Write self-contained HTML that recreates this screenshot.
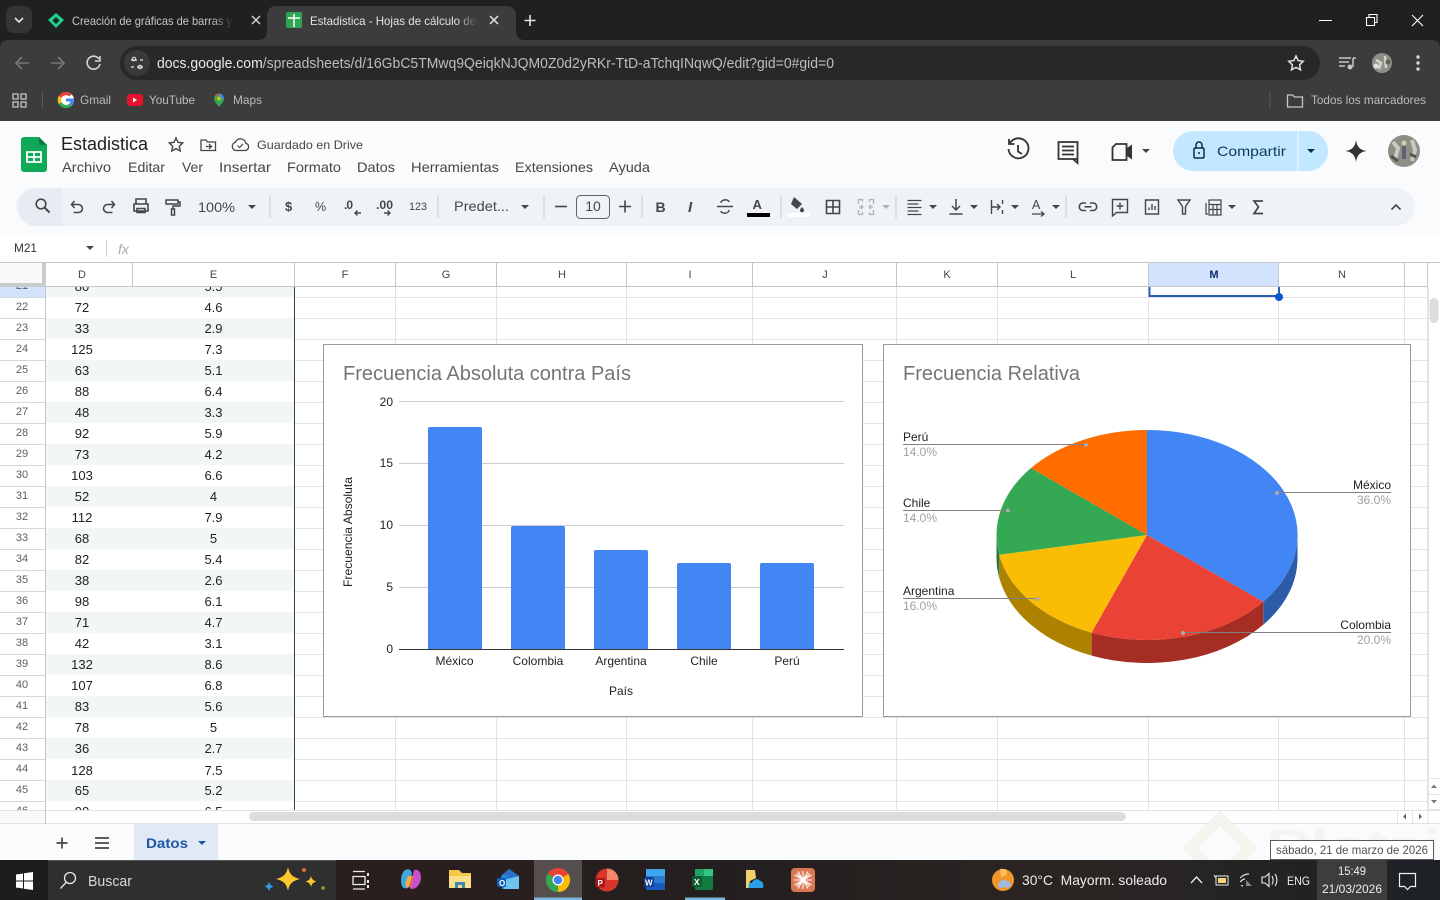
<!DOCTYPE html>
<html lang="es"><head><meta charset="utf-8"><title>Estadistica - Hojas de cálculo de Google</title>
<style>
html,body{margin:0;padding:0;background:#fff;width:1440px;height:900px;overflow:hidden}
svg{display:block}
text{font-family:"Liberation Sans",sans-serif;white-space:pre}
.c{font-size:13px;fill:#222;text-anchor:middle}
.n{font-size:11px;fill:#5a5e62;text-anchor:middle}
.h{font-size:11px;fill:#444;text-anchor:middle}
.m{font-size:14px;fill:#444746}
.t{font-size:13px;fill:#444746}
.i{fill:none;stroke:#444746;stroke-width:1.6}
.f{fill:#444746}
.w{fill:none;stroke:#c7c7c7;stroke-width:1.5}
.b{font-size:12px;fill:#b9bcbf}
.a{font-size:12px;fill:#222}
.p{font-size:12px;fill:#a0a0a0}
.l{stroke:#808080;stroke-width:1}
.d{fill:#aaa}
.s{stroke:#c7cbcf;stroke-width:1}
</style></head><body>
<svg width="1440" height="900" viewBox="0 0 1440 900" xmlns="http://www.w3.org/2000/svg">
<defs>
<linearGradient id="tb" x1="0" x2="1" y1="0" y2="0"><stop offset="0" stop-color="#1d1d1d"/><stop offset=".3" stop-color="#2b1f1e"/><stop offset=".5" stop-color="#241f1f"/><stop offset=".75" stop-color="#2b2523"/><stop offset="1" stop-color="#1d2126"/></linearGradient>
<linearGradient id="fade1" x1="0" x2="1"><stop offset="0" stop-color="#1f2020" stop-opacity="0"/><stop offset="1" stop-color="#1f2020"/></linearGradient>
<linearGradient id="fade2" x1="0" x2="1"><stop offset="0" stop-color="#3c3c3c" stop-opacity="0"/><stop offset="1" stop-color="#3c3c3c"/></linearGradient>
<radialGradient id="av" cx=".5" cy=".5" r=".6"><stop offset="0" stop-color="#8d8f86"/><stop offset=".6" stop-color="#7d7f76"/><stop offset="1" stop-color="#c9cac3"/></radialGradient>
<clipPath id="gr"><rect x="0" y="287" width="1428" height="523"/></clipPath>
</defs>

<!-- browser chrome -->
<rect width="1440" height="121" fill="#1f2020"/>
<rect x="0" y="40" width="1440" height="81" fill="#3c3c3c"/>
<path d="M0 40h8Q0 40 0 48zM1440 40h-8Q1440 40 1440 48z" fill="#1f2020"/>
<rect x="6" y="6" width="26" height="27" rx="8" fill="#343434"/>
<path d="M15 18l4 4 4-4" fill="none" stroke="#e3e3e3" stroke-width="1.600"/>
<path d="M56 13l8 7-8 8-8-8zM56 17l-3.500 3.500 3.500 3.500 3.500-3.500z" fill="#1fd08a" fill-rule="evenodd"/>
<text x="72" y="25" font-size="12" fill="#c4c7c5" textLength="160" lengthAdjust="spacingAndGlyphs">Creación de gráficas de barras y</text>
<rect x="212" y="10" width="22" height="20" fill="url(#fade1)"/>
<path d="M252 16l8 8M260 16l-8 8" stroke="#d5d5d5" stroke-width="1.500"/>
<path d="M258 40q9 0 9-9V16q0-10 10-10h229q10 0 10 10v15q0 9 9 9z" fill="#3c3c3c"/>
<rect x="286" y="12" width="16" height="16" rx="2" fill="#2ea653"/>
<path d="M288 18h12M294 14v13" stroke="#fff" stroke-width="1.500"/>
<text x="310" y="25" font-size="12" fill="#e3e3e3" textLength="166" lengthAdjust="spacingAndGlyphs">Estadistica - Hojas de cálculo de</text>
<rect x="456" y="10" width="22" height="20" fill="url(#fade2)"/>
<path d="M490 16l8 8M498 16l-8 8" stroke="#e3e3e3" stroke-width="1.500"/>
<path d="M530 15v11M524.500 20.500h11" stroke="#e3e3e3" stroke-width="1.600"/>
<path d="M1319 20.500h13" stroke="#fff"/>
<path d="M1366.500 17.500h8v8h-8zM1369 17v-2.500h8v8h-2.500" fill="none" stroke="#fff" stroke-width="1.100"/>
<path d="M1412 15l11 11M1423 15l-11 11" stroke="#fff" stroke-width="1.100"/>

<path d="M29 63H16M22 57l-6 6 6 6" fill="none" stroke="#777" stroke-width="1.600"/>
<path d="M51 63h13M58 57l6 6-6 6" fill="none" stroke="#777" stroke-width="1.600"/>
<path d="M99 59a6.500 6.500 0 1 0 1 5M100 56v5h-5" fill="none" stroke="#d3d3d3" stroke-width="1.600"/>
<rect x="120" y="46" width="1200" height="34" rx="17" fill="#282828"/>
<circle cx="137" cy="63" r="13" fill="#3a3a3a"/>
<path d="M131 60h6M140 60h3M131 67h3M137 67h6" stroke="#e3e3e3" stroke-width="1.300"/><circle cx="134" cy="59" r="1.800" fill="none" stroke="#e3e3e3"/><circle cx="140" cy="67" r="1.800" fill="none" stroke="#e3e3e3"/>
<text x="157" y="68" font-size="14.500" fill="#e8e8e8" textLength="677" lengthAdjust="spacingAndGlyphs">docs.google.com<tspan fill="#bdbdbd">/spreadsheets/d/16GbC5TMwq9QeiqkNJQM0Z0d2yRKr-TtD-aTchqINqwQ/edit?gid=0#gid=0</tspan></text>
<path d="M1296 56l2.200 4.600 5 .7-3.600 3.500.9 5-4.500-2.400-4.500 2.400.9-5-3.600-3.500 5-.7z" fill="none" stroke="#e3e3e3" stroke-width="1.500"/>
<path d="M1339 58h12M1339 62h10M1339 66h6M1353 58v9" stroke="#c7c7c7" stroke-width="1.500" fill="none"/><circle cx="1350" cy="67" r="2.500" fill="#c7c7c7"/><path d="M1353 58h3" stroke="#c7c7c7" stroke-width="1.500"/>
<circle cx="1382" cy="63" r="10" fill="#8e9087"/><path d="M1376 60l5 3-2 6M1385 56l1 12" stroke="#d4d4cc" stroke-width="2.500" fill="none"/><circle cx="1376" cy="66" r="2.500" fill="#e3e3de"/><circle cx="1388" cy="62" r="2.500" fill="#5e6058"/>
<circle cx="1418" cy="57" r="1.700" fill="#d5d5d5"/><circle cx="1418" cy="63" r="1.700" fill="#d5d5d5"/><circle cx="1418" cy="69" r="1.700" fill="#d5d5d5"/>

<path d="M13 94h5v5h-5zM21 94h5v5h-5zM13 102h5v5h-5zM21 102h5v5h-5z" fill="none" stroke="#c7c7c7" stroke-width="1.300"/>
<path d="M42.500 92v16" stroke="#5c5c5c"/>
<circle cx="66" cy="100" r="8" fill="#fff"/>
<path d="M66 92a8 8 0 0 1 5.600 2.300l-2.200 2.200A5 5 0 0 0 61.500 98l-2.700-2A8 8 0 0 1 66 92z" fill="#ea4335"/><path d="M58.800 96l2.700 2a5 5 0 0 0 0 4l-2.700 2a8 8 0 0 1 0-8z" fill="#fbbc05"/><path d="M61.500 102a5 5 0 0 0 7.500 2l2.500 2a8 8 0 0 1-12.700-2z" fill="#34a853"/><path d="M74 100a8 8 0 0 1-2.500 6l-2.500-2a4 4 0 0 0 1.500-2.500H66v-3h7.800z" fill="#4285f4"/>
<text x="80" y="104" class="b" textLength="31" lengthAdjust="spacingAndGlyphs">Gmail</text>
<rect x="127" y="94" width="16" height="12" rx="3" fill="#e8112d"/><path d="M133 97.500l4 2.500-4 2.500z" fill="#fff"/>
<text x="149" y="104" class="b" textLength="46" lengthAdjust="spacingAndGlyphs">YouTube</text>
<path d="M219 107c-2-3-5-5-5-8.500a5 5 0 0 1 10 0c0 3.500-3 5.500-5 8.500z" fill="#34a853"/><path d="M215 95a5 5 0 0 1 4-1.500l-2.500 3z" fill="#ea4335"/><path d="M219 93.500a5 5 0 0 1 5 5l-3 .5z" fill="#4285f4"/><circle cx="219" cy="98.500" r="1.800" fill="#fbbc05"/>
<text x="233" y="104" class="b" textLength="29" lengthAdjust="spacingAndGlyphs">Maps</text>
<path d="M1270 92v16" stroke="#5c5c5c"/>
<path d="M1287.500 95h5l2 2h8v10h-15z" fill="none" stroke="#c7c7c7" stroke-width="1.300"/>
<text x="1311" y="104" class="b" textLength="115" lengthAdjust="spacingAndGlyphs">Todos los marcadores</text>

<!-- docs header -->
<rect x="0" y="121" width="1440" height="113" fill="#f9fbfd"/>
<path d="M24 137h15l8 8v24a3 3 0 0 1-3 3H24a3 3 0 0 1-3-3v-29a3 3 0 0 1 3-3z" fill="#0fa958"/>
<path d="M39 137l8 8h-8z" fill="#0a7e41"/>
<path d="M27 152h14v10H27zM34 152v10M27 157h14" fill="none" stroke="#fff" stroke-width="1.800"/>
<text x="61" y="150" font-size="18" fill="#1f1f1f" textLength="87" lengthAdjust="spacingAndGlyphs">Estadistica</text>
<path d="M176 138l2 4.300 4.700.6-3.400 3.300.9 4.700-4.200-2.300-4.200 2.300.9-4.700-3.400-3.300 4.700-.6z" class="i" style="stroke-width:1.400"/>
<path d="M201 140h5l1.500 2h8v8.500h-14.500zM206 146.500h5M209 144l2.500 2.500-2.500 2.500" class="i" style="stroke-width:1.300"/>
<path d="M236 150.500h9a3.700 3.700 0 0 0 .8-7.300 5.500 5.500 0 0 0-10.500-.9 4.200 4.200 0 0 0 .7 8.200z" class="i" style="stroke-width:1.300"/><path d="M237.500 145.500l2 2 3.500-3.500" class="i" style="stroke-width:1.200"/>
<text x="257" y="149" font-size="12" fill="#444746" textLength="106" lengthAdjust="spacingAndGlyphs">Guardado en Drive</text>
<text x="62" y="172" class="m" textLength="49" lengthAdjust="spacingAndGlyphs">Archivo</text>
<text x="128" y="172" class="m" textLength="37" lengthAdjust="spacingAndGlyphs">Editar</text>
<text x="182" y="172" class="m" textLength="21" lengthAdjust="spacingAndGlyphs">Ver</text>
<text x="219" y="172" class="m" textLength="52" lengthAdjust="spacingAndGlyphs">Insertar</text>
<text x="287" y="172" class="m" textLength="54" lengthAdjust="spacingAndGlyphs">Formato</text>
<text x="357" y="172" class="m" textLength="38" lengthAdjust="spacingAndGlyphs">Datos</text>
<text x="411" y="172" class="m" textLength="88" lengthAdjust="spacingAndGlyphs">Herramientas</text>
<text x="515" y="172" class="m" textLength="78" lengthAdjust="spacingAndGlyphs">Extensiones</text>
<text x="609" y="172" class="m" textLength="41" lengthAdjust="spacingAndGlyphs">Ayuda</text>

<!-- right header icons -->
<path d="M1010 143a10 10 0 1 1-1.500 6M1009 139v5h5.500M1018 145v6.500l4 2.500" fill="none" stroke="#333" stroke-width="1.800"/>
<path d="M1058.500 142h19v17h-19zM1062 146.500h12M1062 150.500h12M1062 154.500h12M1073 159l4.500 4v-4" fill="none" stroke="#333" stroke-width="1.800"/>
<path d="M1116 144h10.500v16h-14v-12.500z" fill="none" stroke="#333" stroke-width="1.800"/><path d="M1127 148l5-3.500v15l-5-3.500z" fill="#333"/>
<path d="M1142 149h8l-4 4z" fill="#444746"/>
<rect x="1173" y="131" width="155" height="40" rx="20" fill="#c2e7ff"/>
<path d="M1298 131v40" stroke="#f9fbfd"/>
<rect x="1194" y="148" width="10" height="10" rx="1.200" fill="none" stroke="#0b2e46" stroke-width="1.500"/><path d="M1196 148v-3a3 3 0 0 1 6 0v3" fill="none" stroke="#0b2e46" stroke-width="1.500"/><circle cx="1199" cy="153" r="1" fill="#0b2e46"/>
<text x="1217" y="156" font-size="14" fill="#0b3b5c" textLength="69" lengthAdjust="spacingAndGlyphs">Compartir</text>
<path d="M1307 149h8l-4 4z" fill="#0b2e46"/>
<path d="M1356 140c1 7 4 10 10.500 11-6.500 1-9.500 4-10.500 11-1-7-4-10-10.500-11 6.500-1 9.500-4 10.500-11z" fill="#333"/>
<circle cx="1404" cy="151" r="16" fill="#8e8f84"/><path d="M1393 142l5 6-3 12M1412 140l3 10-3 11" stroke="#c9cac0" stroke-width="4" fill="none"/><path d="M1402 146h4v13h-4z" fill="#5d6078"/><circle cx="1404" cy="143" r="2.500" fill="#d8c9b5"/><path d="M1391 156l7 5M1410 154l6 3" stroke="#55574f" stroke-width="3"/>

<!-- toolbar -->
<rect x="16" y="188" width="1399" height="38" rx="19" fill="#eff3f8"/>
<path d="M35 188h27v38H35a19 19 0 0 1-17-19 19 19 0 0 1 17-19z" fill="#e7ebf2"/>
<circle cx="41" cy="204" r="4.800" class="i"/><path d="M44.500 207.500l5 5" class="i" style="stroke-width:2"/>
<path d="M74.500 201l-3 3.500 3 3.500M71.500 204.500h7a4 4 0 0 1 0 8h-5" class="i" style="stroke-width:1.500"/>
<path d="M111.500 201l3 3.500-3 3.500M114.500 204.500h-7a4 4 0 0 0 0 8h5" class="i" style="stroke-width:1.500"/>
<path d="M136 204v-5h10v5M134 204h14v7h-14zM137 208.500h8v4h-8z" class="i"/>
<path d="M166 200h12v4h-12zM178 202h2v4h-7v3M171.500 209h3v6h-3z" class="i" style="stroke-width:1.500"/>
<text x="198" y="212" class="m" textLength="37" lengthAdjust="spacingAndGlyphs">100%</text>
<path d="M248 205h8l-4 4z" class="f"/>
<path d="M270 195v23" class="s"/>
<text x="285" y="211" font-size="13" fill="#444746" font-weight="bold">$</text>
<text x="315" y="211" font-size="12.500" fill="#444746">%</text>
<text x="344" y="209" font-size="12" fill="#444746" font-weight="bold" textLength="9">.0</text><path d="M361 213h-6M357.500 210.500l-2.500 2.500 2.500 2.500" class="i" style="stroke-width:1.400"/>
<text x="376" y="209" font-size="12" fill="#444746" font-weight="bold" textLength="17" lengthAdjust="spacingAndGlyphs">.00</text><path d="M384 213h6M387.500 210.500l2.500 2.500-2.500 2.500" class="i" style="stroke-width:1.400"/>
<text x="409" y="210" font-size="11" fill="#444746" textLength="18" lengthAdjust="spacingAndGlyphs">123</text>
<path d="M438 195v23" class="s"/>
<text x="454" y="211" class="m" textLength="55" lengthAdjust="spacingAndGlyphs">Predet...</text>
<path d="M521 205h8l-4 4z" class="f"/>
<path d="M544 195v23" class="s"/>
<path d="M555 206.500h12" class="i"/>
<rect x="576.500" y="195.500" width="33" height="23" rx="4" fill="none" stroke="#5f6368"/>
<text x="593" y="211" class="m" text-anchor="middle">10</text>
<path d="M619 206.500h12M625 200.500v12" class="i"/>
<path d="M642 195v23" class="s"/>
<text x="655.500" y="212" font-size="14" fill="#444746" font-weight="bold">B</text>
<text x="688" y="212" font-size="15" fill="#444746" font-weight="bold" font-style="italic">I</text>
<path d="M717 206.500h16M721 203c0-4 8-4 8-1M729 210c0 4-8 4-8 1" class="i" style="stroke-width:1.400"/>
<text x="752.500" y="209" font-size="13" fill="#444746" font-weight="bold">A</text>
<rect x="747" y="213" width="23" height="4" fill="#000"/>
<path d="M781 195v23" class="s"/>
<path d="M794 197l8 7-5 5-6-5zM802 207c-1.500 1.700-2 2.500-2 3.200a1.800 1.800 0 0 0 4 0c0-.7-.5-1.500-2-3.200z" fill="#444746"/>
<rect x="788" y="213" width="22" height="4" fill="#fff"/>
<path d="M826.500 200.500h13v13h-13zM833 200.500v13M826.500 207h13" class="i"/>
<path d="M858.500 204v-4.500h4v2.500M873.500 204v-4.500h-4v2.500M858.500 210v4.500h4v-2.500M873.500 210v4.500h-4v-2.500M859 207h4M869 207h4M863 207l-2-2M863 207l-2 2M869 207l2-2M869 207l2 2" fill="none" stroke="#b1b4b7" stroke-width="1.300"/>
<path d="M882 205h8l-4 4z" fill="#b1b4b7"/>
<path d="M896 195v23" class="s"/>
<path d="M907.500 200.500h14M907.500 204h11M907.500 207.500h14M907.500 211h11M907.500 214.500h14" class="i" style="stroke-width:1.300"/>
<path d="M929 205h8l-4 4z" class="f"/>
<path d="M956 199v11M952 206l4 4 4-4M949.500 214h13" class="i" style="stroke-width:1.500"/>
<path d="M970 205h8l-4 4z" class="f"/>
<path d="M991.500 200v14M1002.500 200v4M1002.500 210v4M992 207h8M997 204l3 3-3 3" class="i" style="stroke-width:1.400"/>
<path d="M1011 205h8l-4 4z" class="f"/>
<text x="1032" y="209" font-size="12.500" fill="#444746" textLength="12">A</text><path d="M1032 214h12M1041 211.500l3 2.500-3 2.500" class="i" style="stroke-width:1.300"/>
<path d="M1052 205h8l-4 4z" class="f"/>
<path d="M1066 195v23" class="s"/>
<path d="M1086 203h-3.500a3.800 3.800 0 0 0 0 7.500h3.500M1090 203h3.500a3.800 3.800 0 0 1 0 7.500H1090M1084.500 206.800h7" class="i"/>
<path d="M1112.500 199.500h15v13h-11l-4 3.500zM1120 202.500v7M1116.500 206h7" class="i" style="stroke-width:1.400"/>
<path d="M1145.500 200h13v14h-13zM1149 210v-2.500M1152 210v-6M1155 210v-4" class="i" style="stroke-width:1.400"/>
<path d="M1178 200h12l-4.500 6.500v7.500h-3v-7.500z" class="i" style="stroke-width:1.400"/>
<path d="M1206 203v11h2M1209 200h12v15h-12zM1209 204.500h12M1213 204.500v10.500M1217 204.500v10.500M1209 209.500h12" class="i" style="stroke-width:1.200"/>
<path d="M1228 205h8l-4 4z" class="f"/>
<path d="M1263 201h-9l4.500 6-4.500 6.500h9" class="i" style="stroke-width:1.700"/>
<path d="M1391.500 209.500l4.500-4.500 4.500 4.500" class="i"/>

<!-- formula bar -->
<rect x="0" y="234" width="1440" height="29" fill="#fff"/>
<text x="14" y="252" font-size="12" fill="#333" textLength="23" lengthAdjust="spacingAndGlyphs">M21</text>
<path d="M86 246h8l-4 4z" class="f"/>
<path d="M106.500 240v17" stroke="#d5d5d5"/>
<text x="118" y="254" font-size="14" fill="#aaa" font-style="italic" font-family="Liberation Serif">fx</text>

<!-- grid -->
<g clip-path="url(#gr)">
<rect x="0" y="287" width="1428" height="523" fill="#fff"/>
<path d="M46 276h249v21H46zM46 318h249v21H46zM46 360h249v21H46zM46 402h249v21H46zM46 444h249v21H46zM46 486h249v21H46zM46 528h249v21H46zM46 570h249v21H46zM46 612h249v21H46zM46 654h249v21H46zM46 696h249v21H46zM46 738h249v21H46zM46 780h249v21H46z" fill="#f3f6f7"/>
<path d="M0 297.500H46M0 318.500H46M0 339.500H46M0 360.500H46M0 381.500H46M0 402.500H46M0 423.500H46M0 444.500H46M0 465.500H46M0 486.500H46M0 507.500H46M0 528.500H46M0 549.500H46M0 570.500H46M0 591.500H46M0 612.500H46M0 633.500H46M0 654.500H46M0 675.500H46M0 696.500H46M0 717.500H46M0 738.500H46M0 759.500H46M0 780.500H46M0 801.500H46" stroke="#d5d7d9"/>
<path d="M295 297.500H1428M295 318.500H1428M295 339.500H1428M295 360.500H1428M295 381.500H1428M295 402.500H1428M295 423.500H1428M295 444.500H1428M295 465.500H1428M295 486.500H1428M295 507.500H1428M295 528.500H1428M295 549.500H1428M295 570.500H1428M295 591.500H1428M295 612.500H1428M295 633.500H1428M295 654.500H1428M295 675.500H1428M295 696.500H1428M295 717.500H1428M295 738.500H1428M295 759.500H1428M295 780.500H1428M295 801.500H1428" stroke="#e3e3e3"/>
<path d="M395.500 287V810M496.500 287V810M626.500 287V810M752.500 287V810M896.500 287V810M997.500 287V810M1148.500 287V810M1278.500 287V810M1404.500 287V810M1427.500 287V810" stroke="#e3e3e3"/>
<rect x="0" y="276" width="46" height="21" fill="#d3e3fd"/>
<path d="M45.500 287V810" stroke="#c4c7c5"/>
<path d="M294.500 287V810" stroke="#2f454a"/>
<text x="22" y="289" class="n">21</text><text x="82" y="291" class="c">80</text><text x="213.500" y="291" class="c">5.5</text>
<text x="22" y="310" class="n">22</text><text x="82" y="312" class="c">72</text><text x="213.500" y="312" class="c">4.6</text>
<text x="22" y="331" class="n">23</text><text x="82" y="333" class="c">33</text><text x="213.500" y="333" class="c">2.9</text>
<text x="22" y="352" class="n">24</text><text x="82" y="354" class="c">125</text><text x="213.500" y="354" class="c">7.3</text>
<text x="22" y="373" class="n">25</text><text x="82" y="375" class="c">63</text><text x="213.500" y="375" class="c">5.1</text>
<text x="22" y="394" class="n">26</text><text x="82" y="396" class="c">88</text><text x="213.500" y="396" class="c">6.4</text>
<text x="22" y="415" class="n">27</text><text x="82" y="417" class="c">48</text><text x="213.500" y="417" class="c">3.3</text>
<text x="22" y="436" class="n">28</text><text x="82" y="438" class="c">92</text><text x="213.500" y="438" class="c">5.9</text>
<text x="22" y="457" class="n">29</text><text x="82" y="459" class="c">73</text><text x="213.500" y="459" class="c">4.2</text>
<text x="22" y="478" class="n">30</text><text x="82" y="480" class="c">103</text><text x="213.500" y="480" class="c">6.6</text>
<text x="22" y="499" class="n">31</text><text x="82" y="501" class="c">52</text><text x="213.500" y="501" class="c">4</text>
<text x="22" y="520" class="n">32</text><text x="82" y="522" class="c">112</text><text x="213.500" y="522" class="c">7.9</text>
<text x="22" y="541" class="n">33</text><text x="82" y="543" class="c">68</text><text x="213.500" y="543" class="c">5</text>
<text x="22" y="562" class="n">34</text><text x="82" y="564" class="c">82</text><text x="213.500" y="564" class="c">5.4</text>
<text x="22" y="583" class="n">35</text><text x="82" y="585" class="c">38</text><text x="213.500" y="585" class="c">2.6</text>
<text x="22" y="604" class="n">36</text><text x="82" y="606" class="c">98</text><text x="213.500" y="606" class="c">6.1</text>
<text x="22" y="625" class="n">37</text><text x="82" y="627" class="c">71</text><text x="213.500" y="627" class="c">4.7</text>
<text x="22" y="646" class="n">38</text><text x="82" y="648" class="c">42</text><text x="213.500" y="648" class="c">3.1</text>
<text x="22" y="667" class="n">39</text><text x="82" y="669" class="c">132</text><text x="213.500" y="669" class="c">8.6</text>
<text x="22" y="688" class="n">40</text><text x="82" y="690" class="c">107</text><text x="213.500" y="690" class="c">6.8</text>
<text x="22" y="709" class="n">41</text><text x="82" y="711" class="c">83</text><text x="213.500" y="711" class="c">5.6</text>
<text x="22" y="730" class="n">42</text><text x="82" y="732" class="c">78</text><text x="213.500" y="732" class="c">5</text>
<text x="22" y="751" class="n">43</text><text x="82" y="753" class="c">36</text><text x="213.500" y="753" class="c">2.7</text>
<text x="22" y="772" class="n">44</text><text x="82" y="775" class="c">128</text><text x="213.500" y="775" class="c">7.5</text>
<text x="22" y="793" class="n">45</text><text x="82" y="795" class="c">65</text><text x="213.500" y="795" class="c">5.2</text>
<text x="22" y="814" class="n">46</text><text x="82" y="816" class="c">90</text><text x="213.500" y="816" class="c">6.5</text>
<!-- selection -->
<path d="M1149.500 287v9H1279V287" fill="none" stroke="#2b5fb5" stroke-width="2"/>
<circle cx="1279" cy="297" r="4" fill="#0b57d0"/>
</g>

<!-- col headers -->
<rect x="0" y="263" width="1440" height="24" fill="#fff"/>
<rect x="0" y="263" width="46" height="24" fill="#f8f9fa"/>
<rect x="42" y="263" width="4" height="24" fill="#c9cccc"/>
<rect x="0" y="283" width="46" height="4" fill="#c9cccc"/>
<rect x="1149" y="263" width="130" height="24" fill="#d3e3fd"/>
<path d="M0 262.500H1440M46 286.500H1428" stroke="#c4c7c5"/>
<path d="M132.500 263v24M294.500 263v24M395.500 263v24M496.500 263v24M626.500 263v24M752.500 263v24M896.500 263v24M997.500 263v24M1148.500 263v24M1278.500 263v24M1404.500 263v24M1427.500 263v24" stroke="#c4c7c5"/>
<text x="82" y="278" class="h">D</text><text x="213.500" y="278" class="h">E</text><text x="345" y="278" class="h">F</text><text x="446" y="278" class="h">G</text><text x="562" y="278" class="h">H</text><text x="690" y="278" class="h">I</text><text x="825" y="278" class="h">J</text><text x="947" y="278" class="h">K</text><text x="1073" y="278" class="h">L</text><text x="1214" y="278" class="h" font-weight="bold" style="fill:#0b2e6b">M</text><text x="1342" y="278" class="h">N</text>

<!-- bar chart -->
<rect x="323.500" y="344.500" width="539" height="372" fill="#fff" stroke="#9b9b9b"/>
<text x="343" y="380" font-size="20" fill="#757575" textLength="288" lengthAdjust="spacingAndGlyphs">Frecuencia Absoluta contra País</text>
<path d="M399 401.500H844M399 463.500H844M399 525.500H844M399 587.500H844" stroke="#ccc"/>
<path d="M428 649V429q0-2 2-2h50q2 0 2 2V649z" fill="#4285f4"/>
<path d="M511 649V528q0-2 2-2h50q2 0 2 2V649z" fill="#4285f4"/>
<path d="M594 649V552q0-2 2-2h50q2 0 2 2V649z" fill="#4285f4"/>
<path d="M677 649V565q0-2 2-2h50q2 0 2 2V649z" fill="#4285f4"/>
<path d="M760 649V565q0-2 2-2h50q2 0 2 2V649z" fill="#4285f4"/>
<path d="M399 649.500H844" stroke="#333"/>
<text x="393" y="406" class="a" text-anchor="end">20</text>
<text x="393" y="467" class="a" text-anchor="end">15</text>
<text x="393" y="529" class="a" text-anchor="end">10</text>
<text x="393" y="591" class="a" text-anchor="end">5</text>
<text x="393" y="653" class="a" text-anchor="end">0</text>
<text x="454.500" y="665" class="a" text-anchor="middle">México</text>
<text x="538" y="665" class="a" text-anchor="middle">Colombia</text>
<text x="621" y="665" class="a" text-anchor="middle">Argentina</text>
<text x="704" y="665" class="a" text-anchor="middle">Chile</text>
<text x="787" y="665" class="a" text-anchor="middle">Perú</text>
<text x="621" y="695" class="a" text-anchor="middle">País</text>
<text transform="translate(352 532) rotate(-90)" class="a" text-anchor="middle" textLength="110" lengthAdjust="spacingAndGlyphs">Frecuencia Absoluta</text>

<!-- pie chart -->
<rect x="883.500" y="344.500" width="527" height="372" fill="#fff" stroke="#9b9b9b"/>
<text x="903" y="380" font-size="20" fill="#757575" textLength="177" lengthAdjust="spacingAndGlyphs">Frecuencia Relativa</text>
<path d="M1297.500 535A150.500 105 0 0 1 1263.200 601.800V624.800A150.500 105 0 0 0 1297.500 558Z" fill="#2c5ca8"/>
<path d="M1263.200 601.800A150.500 105 0 0 1 1091.600 632.600V655.600A150.500 105 0 0 0 1263.200 624.800Z" fill="#a52d23"/>
<path d="M1091.600 632.600A150.500 105 0 0 1 999.200 554.700V577.700A150.500 105 0 0 0 1091.600 655.600Z" fill="#ad8200"/>
<path d="M999.200 554.700A150.500 105 0 0 1 996.500 535V558A150.500 105 0 0 0 999.200 577.700Z" fill="#24753a"/>
<path d="M1147 535V430A150.500 105 0 0 1 1263.200 601.800Z" fill="#4285f4"/>
<path d="M1147 535L1263.200 601.800A150.500 105 0 0 1 1091.600 632.600Z" fill="#ea4335"/>
<path d="M1147 535L1091.600 632.600A150.500 105 0 0 1 999.200 554.700Z" fill="#fbbc04"/>
<path d="M1147 535L999.200 554.700A150.500 105 0 0 1 1031 468Z" fill="#34a853"/>
<path d="M1147 535L1031 468A150.500 105 0 0 1 1147 430Z" fill="#ff6d01"/>
<path d="M903 444.500H1086M903 510.500H1008M903 598.500H1037M1277 492.500H1391M1183 632.500H1391" class="l"/>
<circle cx="1086" cy="445" r="2" class="d"/><circle cx="1008" cy="510.500" r="2" class="d"/><circle cx="1037" cy="599" r="2" class="d"/><circle cx="1277" cy="493" r="2" class="d"/><circle cx="1183" cy="633" r="2" class="d"/>
<text x="903" y="441" class="a">Perú</text><text x="903" y="456" class="p">14.0%</text>
<text x="903" y="507" class="a">Chile</text><text x="903" y="522" class="p">14.0%</text>
<text x="903" y="595" class="a">Argentina</text><text x="903" y="610" class="p">16.0%</text>
<text x="1391" y="489" class="a" text-anchor="end">México</text><text x="1391" y="504" class="p" text-anchor="end">36.0%</text>
<text x="1391" y="629" class="a" text-anchor="end">Colombia</text><text x="1391" y="644" class="p" text-anchor="end">20.0%</text>

<!-- vertical scrollbar -->
<rect x="1428" y="287" width="12" height="523" fill="#fff"/>
<path d="M1428.500 287V822" stroke="#e3e3e3"/>
<rect x="1429.500" y="298" width="9" height="25" rx="4.500" fill="#dadce0"/>
<path d="M1431 788l3-3.500 3 3.500z" fill="#777"/><path d="M1431 800l3 3.500 3-3.500z" fill="#777"/>
<path d="M1429 778.500H1440M1429 794.500H1440M1429 809.500H1440" stroke="#e3e3e3"/>

<!-- horizontal scrollbar -->
<rect x="0" y="810" width="1440" height="14" fill="#fff"/>
<rect x="0" y="810" width="46" height="14" fill="#f8f9fa"/>
<path d="M0 810.500H1440M0 823.500H1440" stroke="#e1e3e1"/>
<path d="M45.500 810V824" stroke="#c4c7c5"/>
<rect x="249" y="812" width="877" height="9" rx="4.500" fill="#dadce0"/>
<path d="M1397.500 811v12M1412.500 811v12M1428 811v12" stroke="#e3e3e3"/>
<path d="M1406 813.500l-3 3 3 3z" fill="#666"/><path d="M1419 813.500l3 3-3 3z" fill="#666"/>

<!-- sheet bar -->
<rect x="0" y="824" width="1440" height="36" fill="#f9fbfd"/>
<path d="M1220 818l30 30-30 30-30-30z" fill="none" stroke="#f1f5ed" stroke-width="11"/>
<text x="1266" y="862" font-size="46" font-weight="bold" fill="#f3f4f5" textLength="174" lengthAdjust="spacingAndGlyphs">Platzi</text>
<path d="M62 837.500v11M56.500 843h11" stroke="#444746" stroke-width="1.700"/>
<path d="M95 838h14M95 843h14M95 848h14" stroke="#444746" stroke-width="1.700"/>
<rect x="134" y="824" width="84" height="36" fill="#e1e9f7"/>
<text x="146" y="848" font-size="14" font-weight="bold" fill="#1b57a6" textLength="42" lengthAdjust="spacingAndGlyphs">Datos</text>
<path d="M198 841h8l-4 4z" fill="#1b57a6"/>

<!-- taskbar -->
<rect x="0" y="860" width="1440" height="40" fill="url(#tb)"/>
<path d="M16 874.500l7-1v7h-7zM24 873.300l9-1.300v8.500h-9zM16 881.500h7v7l-7-1zM24 881.500h9V890l-9-1.300z" fill="#fff"/>
<rect x="48" y="860" width="288" height="40" fill="#2f2f2f"/>
<path d="M48.500 860.500H336" stroke="#555"/>
<circle cx="70" cy="878" r="5.500" fill="none" stroke="#e8e8e8" stroke-width="1.300"/><path d="M66 882.500l-5.500 6" stroke="#e8e8e8" stroke-width="1.300"/>
<text x="88" y="886" font-size="14.500" fill="#d8d8d8" textLength="44" lengthAdjust="spacingAndGlyphs">Buscar</text>
<path d="M288 867c1.500 7 4 10 12 12-8 2-10.500 5-12 12-1.500-7-4-10-12-12 8-2 10.500-5 12-12z" fill="#fcc62d"/>
<path d="M311 876c.7 3 2 4.500 5.500 5.500-3.500 1-4.800 2.500-5.500 5.500-.7-3-2-4.500-5.500-5.500 3.500-1 4.800-2.500 5.500-5.500z" fill="#fcc62d"/>
<path d="M269 882l1.500 3 3 1.500-3 1.500-1.500 3-1.500-3-3-1.500 3-1.500z" fill="#2d9fe0"/>
<circle cx="304" cy="870" r="2" fill="#e0673a"/><circle cx="323" cy="888" r="1.700" fill="#7cb342"/>
<path d="M353 871.500h12M353 889h12M353 876.500h12v8h-12z" fill="none" stroke="#eee" stroke-width="1.300"/><path d="M368 873v3M368 880v3M368 885v3" stroke="#eee" stroke-width="2"/>

<rect x="534" y="860" width="48" height="40" fill="#544e4e"/>
<rect x="534" y="897.500" width="48" height="2.500" fill="#7eb3dc"/>
<rect x="685" y="897.500" width="40" height="2.500" fill="#7eb3dc"/>
<!-- copilot -->
<path d="M405 870c4-2 6 0 7 3l-3 14c-1 2-6 2-7-1-2-5-1-13 3-16z" fill="#3fa7e0"/><path d="M408 876c-2 4-3 8-2 11 2 1 3 0 4-2l2-9z" fill="#f2b13a"/>
<path d="M414 870c4-1 7 2 7 7 0 6-4 12-9 12-3 0-2-4-1-7l3-12z" fill="#c452c9"/><path d="M412 876l2 0-2 11c-1 1-3 1-3-1z" fill="#ee5b7c"/>
<!-- explorer -->
<path d="M449 870h10l3 3h9v15h-22z" fill="#f2c84b"/><path d="M449 876h22v12h-22z" fill="#fbe08a"/><path d="M455 882h10v6h-3v-3h-4v3h-3z" fill="#3f86b8"/>
<!-- outlook -->
<path d="M509 869l10 7v12a1 1 0 0 1-1 1h-16v-9l-1-4z" fill="#1b8ce0"/><path d="M503 874l6-5 10 7-5 5z" fill="#2e6fc7"/><path d="M504 880l15-4v12a1 1 0 0 1-1 1h-14z" fill="#6fc3f0"/><rect x="497" y="878" width="9" height="9" rx="1.500" fill="#0f5db5"/><text x="499" y="886" font-size="8" font-weight="bold" fill="#fff">O</text>
<!-- chrome -->
<circle cx="558" cy="880" r="12" fill="#ea4335"/>
<path d="M558 880l-10.400 6A12 12 0 0 1 548 873.500z" fill="#34a853"/><path d="M558 880l-10.400 6A12 12 0 0 0 558 892z" fill="#34a853"/><path d="M558 880l10.400-6a12 12 0 0 1-10.400 18z" fill="#fbbc05"/>
<circle cx="558" cy="880" r="5.500" fill="#fff"/><circle cx="558" cy="880" r="4.300" fill="#4285f4"/>
<!-- powerpoint -->
<circle cx="607" cy="880" r="11.500" fill="#d7362a"/><path d="M607 868.500a11.500 11.500 0 0 1 11.500 11.500H607z" fill="#f4846b"/>
<rect x="595.500" y="878" width="9.500" height="9.500" rx="1.500" fill="#a5161a"/><text x="597.500" y="886" font-size="8" font-weight="bold" fill="#fff">P</text>
<!-- word -->
<rect x="646" y="869" width="19" height="7" fill="#41a5ee"/><rect x="646" y="876" width="19" height="7" fill="#2b7cd3"/><rect x="646" y="883" width="19" height="7" fill="#185abd"/><rect x="644" y="877" width="10" height="10" rx="1.500" fill="#103f91"/><text x="645" y="885.500" font-size="8" font-weight="bold" fill="#fff">W</text>
<!-- excel -->
<rect x="695" y="869" width="18" height="21" rx="2" fill="#107c41"/><rect x="704" y="869" width="9" height="7" fill="#33c481"/><rect x="695" y="869" width="9" height="7" fill="#21a366"/><rect x="692" y="876" width="10" height="11" rx="1.500" fill="#0e5c2f"/><text x="694" y="885" font-size="8.500" font-weight="bold" fill="#fff">X</text>
<!-- onedrive folder -->
<path d="M746 870h9l1 8-6 3-1 7h-3z" fill="#f2cf6b"/><path d="M749 888c-2-3 1-6 3-5 1-4 6-5 8-2 3 0 4 4 3 7z" fill="#2a9fea"/>
<!-- sun app -->
<rect x="791" y="868" width="24" height="24" rx="4" fill="#da7756"/>
<path d="M803 871v18M794 880h18M796.500 873.500l13 13M809.500 873.500l-13 13M798 871.500l10 17M808 871.500l-10 17M794.500 875l17 10M794.500 885l17-10" stroke="#fff" stroke-width="1.100"/>
<!-- weather -->
<circle cx="1003" cy="880" r="11" fill="#f0962b"/><path d="M1000 869a11 11 0 0 1 7 1l-1 5-5 2z" fill="#f7c25d"/>
<path d="M1000 888c-3-1-3-5 0-6 1-3 6-3 7-1 3 0 5 3 3 6z" fill="#9fb8db"/>
<text x="1022" y="885" font-size="14" fill="#eee" textLength="145" lengthAdjust="spacingAndGlyphs">30°C  Mayorm. soleado</text>
<path d="M1191 883l5.500-6 5.500 6" fill="none" stroke="#eee" stroke-width="1.300"/>
<path d="M1216 876h12v9h-12zM1214 875l2 3" fill="none" stroke="#eee"/><rect x="1218" y="878" width="8" height="5" fill="#f4d87a"/>
<path d="M1241 886a2 2 0 0 1 2 0M1240 882c2-2 4-3 5-3M1240 878c3-3 6-4 9-4" fill="none" stroke="#ddd" stroke-width="1.200"/><path d="M1246 880l6 6h-6z" fill="#888"/>
<path d="M1262 877h3l4-3.500v13l-4-3.500h-3zM1272 876c1.500 2.500 1.500 6 0 8.500M1275 874c2.500 3.500 2.500 8.500 0 12" fill="none" stroke="#eee" stroke-width="1.100"/>
<text x="1287" y="885" font-size="12" fill="#eee" textLength="23" lengthAdjust="spacingAndGlyphs">ENG</text>
<rect x="1317" y="860" width="70" height="40" fill="#3d3d3d"/>
<text x="1352" y="875" font-size="12" fill="#eee" text-anchor="middle" textLength="28" lengthAdjust="spacingAndGlyphs">15:49</text>
<text x="1352" y="893" font-size="12" fill="#eee" text-anchor="middle" textLength="60" lengthAdjust="spacingAndGlyphs">21/03/2026</text>
<path d="M1399.500 873.500h16v13h-5l-3 3-3-3h-5z" fill="none" stroke="#f1f1f1" stroke-width="1.200"/>

<!-- tooltip -->
<rect x="1270.500" y="840.500" width="163" height="19" fill="#fff" stroke="#5a5a5a"/>
<text x="1276" y="854" font-size="12" fill="#505050" textLength="152" lengthAdjust="spacingAndGlyphs">sábado, 21 de marzo de 2026</text>
</svg>
</body></html>
